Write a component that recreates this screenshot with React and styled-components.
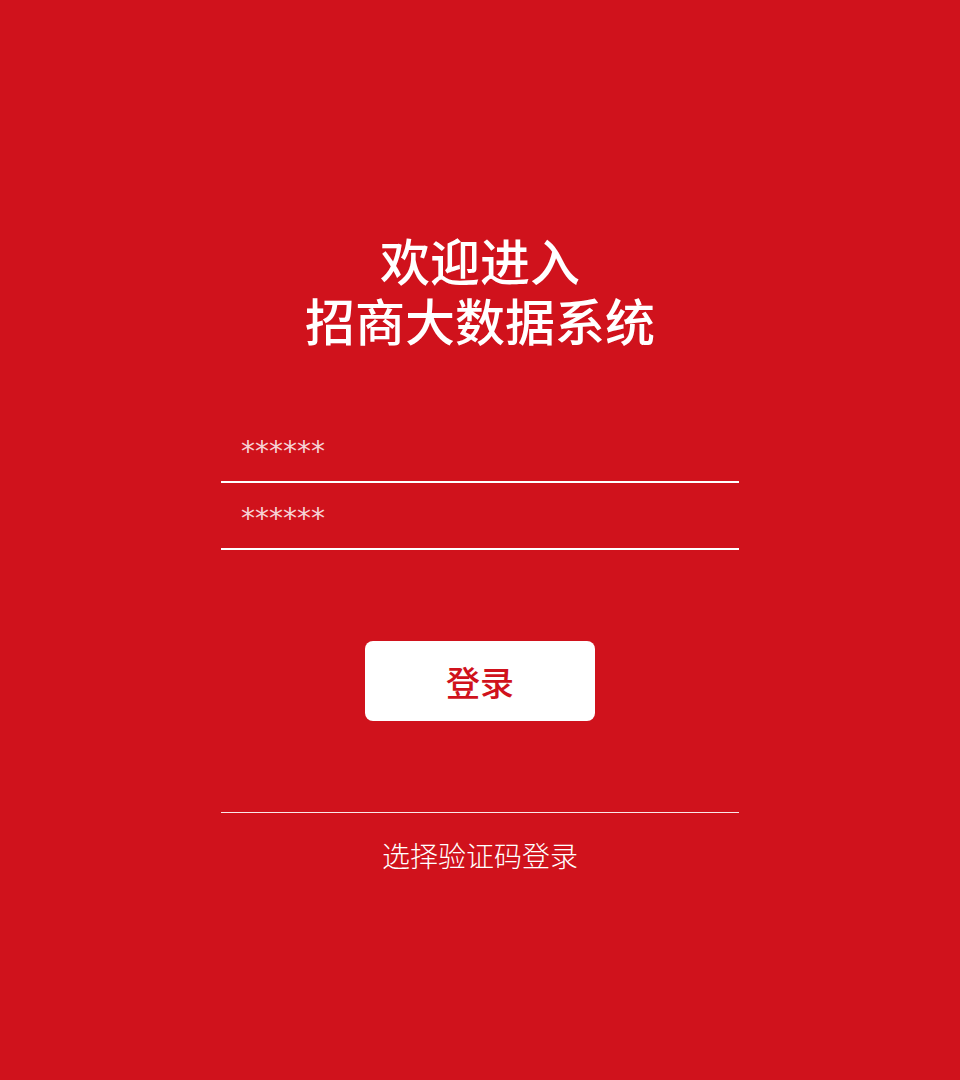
import React from 'react';
import styled, { createGlobalStyle } from 'styled-components';

const GlobalStyle = createGlobalStyle`
    html, body {
        margin: 0;
        padding: 0;
        background: #d0121c;
    }
    body {
        font-family: "Noto Sans CJK SC", "Noto Sans", sans-serif;
    }
`;

const Page = styled.div`
    min-height: 1080px;
    background: #d0121c;
    display: flex;
    flex-direction: column;
    align-items: center;
    padding-top: 229px;
    box-sizing: border-box;
`;

const Title = styled.h1`
    margin: 0;
    color: #fff;
    font-size: 50px;
    font-weight: 500;
    line-height: 60px;
    text-align: center;
`;

const Form = styled.form`
    width: 518px;
    margin-top: 67px;
    display: flex;
    flex-direction: column;
`;

const Field = styled.input`
    height: 67px;
    box-sizing: border-box;
    border: none;
    border-bottom: 2px solid #fff;
    background: transparent;
    padding: 6px 20px 0;
    color: #fff;
    font-size: 28px;
    font-family: "DejaVu Sans", sans-serif;
    outline: none;

    &::placeholder {
        color: rgba(255, 255, 255, 0.82);
    }
`;

const Submit = styled.button`
    align-self: center;
    width: 230px;
    height: 80px;
    margin-top: 91px;
    border: none;
    border-radius: 8px;
    background: #fff;
    color: #d0121c;
    font-family: "Noto Sans CJK SC", sans-serif;
    font-size: 34px;
    font-weight: 500;
    cursor: pointer;
`;

const Footer = styled.div`
    width: 518px;
    margin-top: 91px;
    border-top: 1px solid rgba(255, 255, 255, 0.9);
    display: flex;
    justify-content: center;
`;

const SwitchLink = styled.a`
    margin-top: 22px;
    color: #fff;
    font-size: 28px;
    font-weight: 300;
    line-height: 40px;
    cursor: pointer;
`;

const App = () => (
    <>
        <GlobalStyle />
        <Page>
            <Title>
                欢迎进入<br />招商大数据系统
            </Title>
            <Form onSubmit={e => e.preventDefault()}>
                <Field type="text" placeholder="******" />
                <Field type="password" placeholder="******" />
                <Submit type="submit">登录</Submit>
            </Form>
            <Footer>
                <SwitchLink>选择验证码登录</SwitchLink>
            </Footer>
        </Page>
    </>
);

export default App;
